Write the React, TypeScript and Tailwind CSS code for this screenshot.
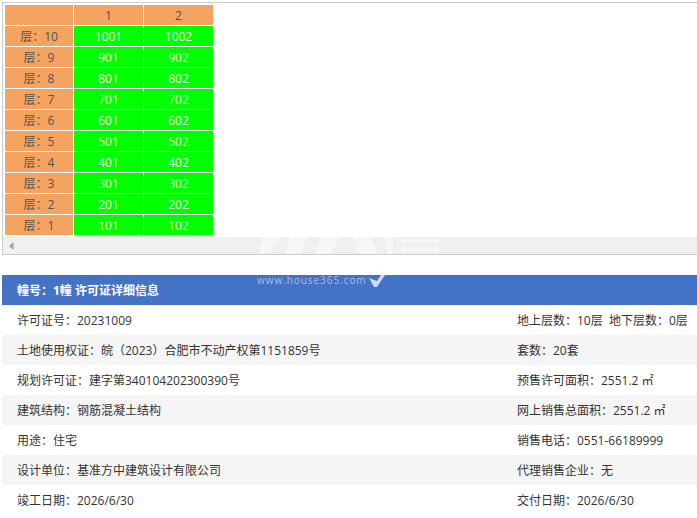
const floors = [10, 9, 8, 7, 6, 5, 4, 3, 2, 1];

const rows = [
  ['许可证号：20231009', '地上层数：10层  地下层数：0层'],
  ['土地使用权证：皖（2023）合肥市不动产权第1151859号', '套数：20套'],
  ['规划许可证：建字第340104202300390号', '预售许可面积：2551.2 ㎡'],
  ['建筑结构：钢筋混凝土结构', '网上销售总面积：2551.2 ㎡'],
  ['用途：住宅', '销售电话：0551-66189999'],
  ['设计单位：基准方中建筑设计有限公司', '代理销售企业：无'],
  ['竣工日期：2026/6/30', '交付日期：2026/6/30'],
];

const font = { fontFamily: '"Open Sans", "Noto Sans CJK SC", sans-serif' };

export default function App() {
  return (
    <div className="relative h-[518px] w-[697px] overflow-hidden bg-white text-[12px] text-[#333]" style={font}>
      <div className="ml-0.5 mt-0.5 h-[253px] border-t border-b border-l border-[#ccc]">
        <div className="pl-[2px] pt-[2px]">
          <div className="grid w-[208px] grid-cols-[68px_69px_69px] gap-px bg-white">
            <div className="h-5 bg-[#f4a460]" />
            <div className="flex h-5 items-center justify-center bg-[#f4a460] pt-px text-[#555]">1</div>
            <div className="flex h-5 items-center justify-center bg-[#f4a460] pt-px text-[#555]">2</div>
            {floors.map((f) => (
              <div key={f} className="contents">
                <div className="flex h-5 items-center justify-center bg-[#f4a460] pt-px text-[#555]">层：{f}</div>
                <div className="flex h-5 items-center justify-center bg-[#00ff00] pt-px text-[#e8f5e8]">{f}01</div>
                <div className="flex h-5 items-center justify-center bg-[#00ff00] pt-px text-[#e8f5e8]">{f}02</div>
              </div>
            ))}
          </div>
        </div>
        <div className="mt-[2px] flex h-[17px] items-center bg-[#f0f0f0] pl-[6px]">
          <svg width="5" height="8" viewBox="0 0 5 8"><path d="M4.5 0 L0 4 L4.5 8 Z" fill="#a3a3a3" /></svg>
        </div>
      </div>
      <div className="ml-0.5 mt-5">
        <div className="flex h-[30px] items-center bg-[#4472c4] pl-[15px] pt-0.5 font-bold text-white">幢号：1幢 许可证详细信息</div>
        {rows.map((r, i) => (
          <div key={r[0]} className={`flex h-[30px] items-center justify-between pl-[15px] pt-0.5 ${i % 2 === 1 ? 'bg-[#f5f5f5]' : 'bg-white'}`}>
            <span>{r[0]}</span>
            <span className="w-[180px] whitespace-pre">{r[1]}</span>
          </div>
        ))}
      </div>
      {/* house365 watermark, lies over the scrollbar and the blue bar */}
      <svg className="absolute left-[255px] top-[237px]" width="190" height="17" viewBox="0 0 190 17" fill="#fff" opacity="0.45">
        <path d="M8 0 H26 L14 17 H4 Z" />
        <path d="M36 0 H54 L44 17 H30 Z" />
        <path d="M66 0 H84 L76 17 H60 Z" />
        <path d="M98 0 H116 L122 17 H104 Z" />
        <path d="M132 0 H138 V17 H132 Z" />
        <path d="M146 2 H184 V6 H146 Z M146 10 H184 V14 H146 Z" />
      </svg>
      <span className="absolute left-[257px] top-[273px] text-[10px] tracking-[0.95px] text-[#a9bde2]">www.house365.com</span>
      <svg className="absolute left-[369px] top-[275px]" width="17" height="12" viewBox="0 0 17 12" fill="#cfdaf0">
        <path d="M0 3 L8 6 L12 0 H16 L8 12 H5 Z" />
      </svg>
    </div>
  );
}
